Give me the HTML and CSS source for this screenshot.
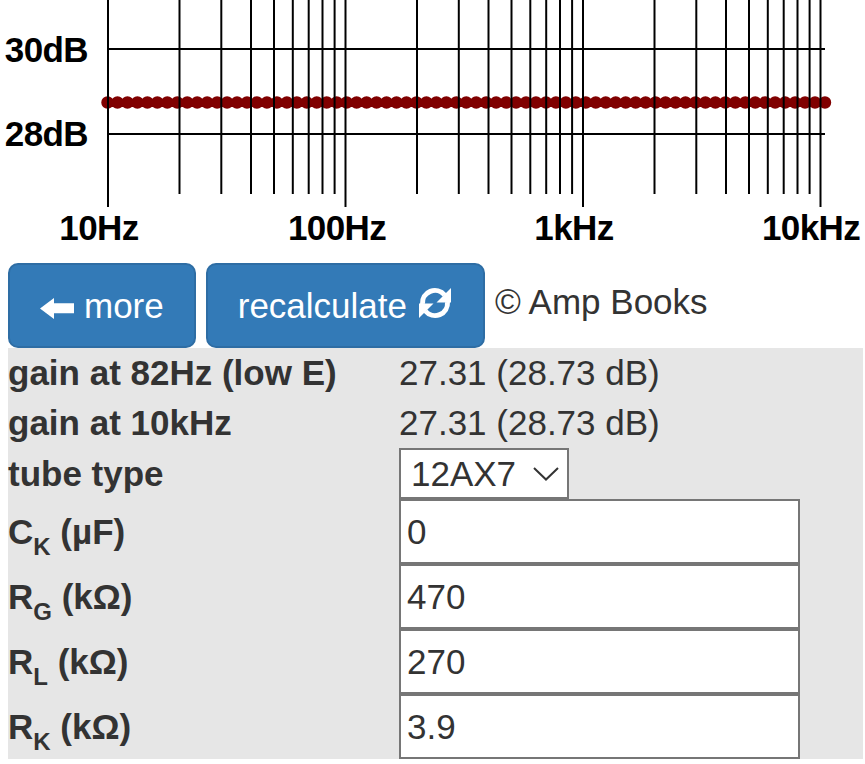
FILE: index.html
```html
<!DOCTYPE html>
<html lang="en">
<head>
    <meta charset="UTF-8">
    <meta name="viewport" content="width=device-width, initial-scale=1.0">
    <title>Cathode follower / gain stage calculator</title>
    <link rel="stylesheet" href="styles.css">
</head>
<body>

    <!-- frequency response plot -->
    <svg class="chart" width="865" height="263" viewBox="0 0 865 263">
        <line class="trace" x1="107.5" y1="102.5" x2="825" y2="102.5" />

        <g class="grid">
            <line x1="108" y1="49" x2="825" y2="49" />
            <line x1="108" y1="134" x2="825" y2="134" />

            <line x1="108" y1="0" x2="108" y2="207" />
            <line x1="179.5" y1="0" x2="179.5" y2="194" />
            <line x1="221.3" y1="0" x2="221.3" y2="194" />
            <line x1="251" y1="0" x2="251" y2="194" />
            <line x1="274" y1="0" x2="274" y2="194" />
            <line x1="292.8" y1="0" x2="292.8" y2="194" />
            <line x1="308.7" y1="0" x2="308.7" y2="194" />
            <line x1="322.5" y1="0" x2="322.5" y2="194" />
            <line x1="334.6" y1="0" x2="334.6" y2="194" />

            <line x1="345.5" y1="0" x2="345.5" y2="207" />
            <line x1="417" y1="0" x2="417" y2="194" />
            <line x1="458.8" y1="0" x2="458.8" y2="194" />
            <line x1="488.5" y1="0" x2="488.5" y2="194" />
            <line x1="511.5" y1="0" x2="511.5" y2="194" />
            <line x1="530.3" y1="0" x2="530.3" y2="194" />
            <line x1="546.2" y1="0" x2="546.2" y2="194" />
            <line x1="560" y1="0" x2="560" y2="194" />
            <line x1="572.1" y1="0" x2="572.1" y2="194" />

            <line x1="583" y1="0" x2="583" y2="207" />
            <line x1="654.5" y1="0" x2="654.5" y2="194" />
            <line x1="696.3" y1="0" x2="696.3" y2="194" />
            <line x1="726" y1="0" x2="726" y2="194" />
            <line x1="749" y1="0" x2="749" y2="194" />
            <line x1="767.8" y1="0" x2="767.8" y2="194" />
            <line x1="783.7" y1="0" x2="783.7" y2="194" />
            <line x1="797.5" y1="0" x2="797.5" y2="194" />
            <line x1="809.6" y1="0" x2="809.6" y2="194" />

            <line x1="820.5" y1="0" x2="820.5" y2="207" />
        </g>

        <g class="axis-y">
            <text x="88" y="62">30dB</text>
            <text x="88" y="146">28dB</text>
        </g>
        <g class="axis-x">
            <text x="99" y="240">10Hz</text>
            <text x="337" y="240">100Hz</text>
            <text x="574" y="240">1kHz</text>
            <text x="811" y="240">10kHz</text>
        </g>
    </svg>

    <div class="toolbar">
        <button class="btn" type="button">
            <svg class="icon-back" width="34" height="21" viewBox="0 0 34 21">
                <polygon points="0,10.5 14,0 14,5.3 34,5.3 34,15.3 14,15.3 14,21" />
            </svg>
            more
        </button>
        <button class="btn" type="button">
            recalculate
            <svg class="icon-refresh" width="36" height="32" viewBox="0 0 36 32">
                <path d="M5.5,17 A12.5,12.5 0 0 1 27.6,8" />
                <polygon points="34,1 34,15.5 19.5,15.5" />
                <path d="M30.5,15 A12.5,12.5 0 0 1 8.4,24" />
                <polygon points="2,31 2,16.5 16.5,16.5" />
            </svg>
        </button>
        <span class="credit">&copy; Amp Books</span>
    </div>

    <table class="params">
        <tr class="row-text">
            <td class="label">gain at 82Hz (low E)</td>
            <td>27.31 (28.73 dB)</td>
        </tr>
        <tr class="row-text">
            <td class="label">gain at 10kHz</td>
            <td>27.31 (28.73 dB)</td>
        </tr>
        <tr>
            <td class="label">tube type</td>
            <td>
                <div class="select-wrap">
                    <select class="tube">
                        <option>12AX7</option>
                        <option>12AT7</option>
                        <option>12AU7</option>
                        <option>ECC83</option>
                    </select>
                    <svg class="chevron" width="26" height="14" viewBox="0 0 26 14">
                        <polyline points="1,1 13,12.5 25,1" />
                    </svg>
                </div>
            </td>
        </tr>
        <tr>
            <td class="label">C<sub>K</sub> (&micro;F)</td>
            <td><input type="text" value="0"></td>
        </tr>
        <tr>
            <td class="label">R<sub>G</sub> (k&Omega;)</td>
            <td><input type="text" value="470"></td>
        </tr>
        <tr>
            <td class="label">R<sub>L</sub> (k&Omega;)</td>
            <td><input type="text" value="270"></td>
        </tr>
        <tr>
            <td class="label">R<sub>K</sub> (k&Omega;)</td>
            <td><input type="text" value="3.9"></td>
        </tr>
    </table>

</body>
</html>
```

FILE: styles.css
```css
body {
    font-family: "Liberation Sans", Arial, Helvetica, sans-serif;
    font-size: 35px;
    line-height: 50px;
    color: #333;
    margin: 0;
    background-color: #fff;
}

/* chart */
.chart {
    display: block;
}

.chart .trace {
    stroke: #800000;
    stroke-width: 12.5;
    stroke-linecap: round;
    stroke-dasharray: 0 9.965;
}

.chart .grid line {
    stroke: #000;
    stroke-width: 2;
}

.chart text {
    font-family: "Liberation Sans", Arial, sans-serif;
    font-weight: bold;
    font-size: 35px;
    fill: #000;
    letter-spacing: -0.6px;
}

.axis-y text {
    text-anchor: end;
}

.axis-x text {
    text-anchor: middle;
}

/* buttons row */
.toolbar {
    display: flex;
    align-items: center;
    gap: 10px;
    padding: 0 8px;
    height: 85px;
}

.btn {
    display: flex;
    align-items: center;
    gap: 10px;
    box-sizing: border-box;
    height: 85px;
    padding: 0 30px;
    font-family: inherit;
    font-size: 35px;
    color: #fff;
    background-color: #337ab7;
    border: 2.5px solid #2e6da4;
    border-radius: 10px;
    cursor: pointer;
}

.btn:hover {
    background-color: #286090;
}

.icon-back {
    fill: #fff;
    margin-top: 6px;
}

.icon-refresh {
    margin-bottom: 6px;
}

.icon-refresh path {
    fill: none;
    stroke: #fff;
    stroke-width: 5;
}

.icon-refresh polygon {
    fill: #fff;
}

.credit {
    margin-bottom: 7px;
}

/* parameter table */
.params {
    margin-left: 8px;
    width: 855px;
    border-collapse: collapse;
    border-spacing: 0;
    background-color: #e6e6e6;
}

.params td {
    padding: 0;
    vertical-align: middle;
}

.params .label {
    width: 391px;
    font-weight: bold;
}

.row-text td {
    height: 50px;
}

.params sub {
    font-size: 24px;
    line-height: 0;
    position: relative;
    vertical-align: baseline;
    bottom: -11px;
}

.select-wrap {
    position: relative;
    display: inline-block;
    vertical-align: top;
}

.tube {
    appearance: none;
    -webkit-appearance: none;
    display: block;
    box-sizing: border-box;
    width: 170px;
    height: 51px;
    padding: 0 0 0 10px;
    font-family: inherit;
    font-size: 35px;
    color: #333;
    background-color: #fff;
    border: 2.5px solid #767676;
    border-radius: 0;
}

.chevron {
    position: absolute;
    right: 10px;
    top: 19px;
    pointer-events: none;
}

.chevron polyline {
    fill: none;
    stroke: #333;
    stroke-width: 2;
}

.params input {
    display: block;
    box-sizing: border-box;
    width: 401px;
    height: 65px;
    padding: 0 6px;
    font-family: inherit;
    font-size: 35px;
    color: #333;
    background-color: #fff;
    border: 2.5px solid #767676;
    border-radius: 0;
}
```
